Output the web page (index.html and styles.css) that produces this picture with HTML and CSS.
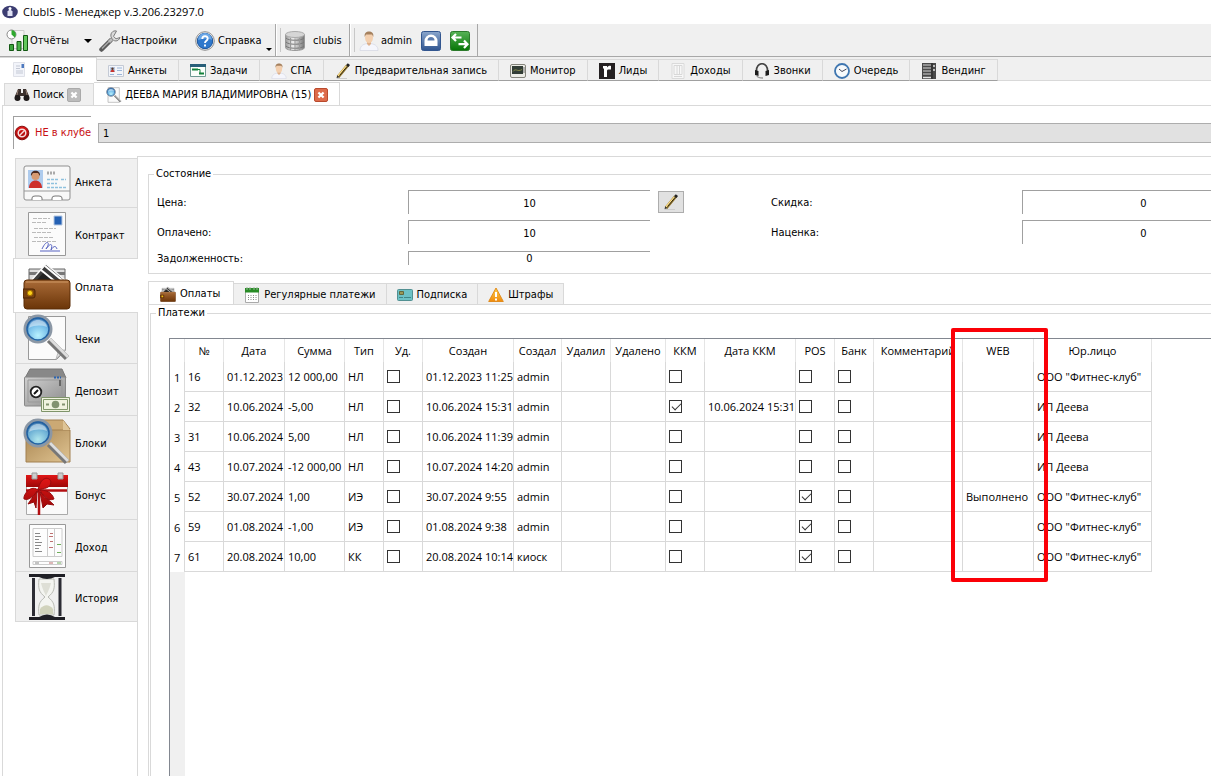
FILE: index.html
```html
<!DOCTYPE html>
<html lang="ru">
<head>
<meta charset="utf-8">
<title>ClubIS - Менеджер v.3.206.23297.0</title>
<link rel="stylesheet" href="styles.css">
</head>
<body>
<svg class="defs" aria-hidden="true">
  <defs>
    <linearGradient id="g-blue" x1="0" y1="0" x2="0" y2="1"><stop offset="0" stop-color="#8aa6cc"/><stop offset="1" stop-color="#2f548f"/></linearGradient>
    <linearGradient id="g-green" x1="0" y1="0" x2="0" y2="1"><stop offset="0" stop-color="#57b357"/><stop offset="1" stop-color="#067506"/></linearGradient>
    <linearGradient id="g-steel" x1="0" y1="0" x2="1" y2="0"><stop offset="0" stop-color="#999"/><stop offset=".4" stop-color="#eee"/><stop offset="1" stop-color="#777"/></linearGradient>
    <linearGradient id="g-brown" x1="0" y1="0" x2="0" y2="1"><stop offset="0" stop-color="#a96b38"/><stop offset="1" stop-color="#6b3508"/></linearGradient>
    <linearGradient id="g-safe" x1="0" y1="0" x2="1" y2="1"><stop offset="0" stop-color="#d0d0d0"/><stop offset="1" stop-color="#8c8c8c"/></linearGradient>
    <linearGradient id="g-box" x1="0" y1="0" x2="1" y2="1"><stop offset="0" stop-color="#a98652"/><stop offset="1" stop-color="#e0c492"/></linearGradient>
    <linearGradient id="g-red" x1="0" y1="0" x2="0" y2="1"><stop offset="0" stop-color="#e01616"/><stop offset="1" stop-color="#9d0808"/></linearGradient>
    <linearGradient id="g-warn" x1="0" y1="0" x2="0" y2="1"><stop offset="0" stop-color="#ffd24a"/><stop offset="1" stop-color="#f08a0c"/></linearGradient>
    <radialGradient id="g-lens" cx=".5" cy=".75" r=".75"><stop offset="0" stop-color="#aef0ff"/><stop offset=".55" stop-color="#63b4e6"/><stop offset="1" stop-color="#1d5ca8"/></radialGradient>
    <symbol id="i-magnifier" viewBox="0 0 48 48">
      <path d="M26 26l18 18" stroke="#777" stroke-width="6"/><path d="M27 25l18 18" stroke="#ddd" stroke-width="3"/>
      <circle cx="15" cy="15" r="13" fill="url(#g-lens)" fill-opacity=".88" stroke="#8b97a5" stroke-width="3"/>
      <circle cx="15" cy="15" r="11" fill="none" stroke="#2360a0" stroke-width="1.5"/>
      <path d="M6 14c1-6 5-8 9-8s8 2 9 7c-6-2-12-2-18 1z" fill="#fff" opacity=".45"/>
    </symbol>
    <symbol id="i-wallet" viewBox="0 0 48 48">
      <path d="M6 7h36v16H6z" fill="#ddd" stroke="#666"/><path d="M6 10h36v3H6z" fill="#777"/>
      <path d="M6 21L23 2l20 17" fill="#3d3d3d" stroke="#fafafa" stroke-width="1.5"/><path d="M12 20l9-10 15 12z" fill="#222"/><path d="M18 8l16 13M22 4l18 15" stroke="#fff" stroke-width="2"/>
      <rect x="1" y="18" width="46" height="29" rx="3" fill="url(#g-brown)" stroke="#5a2c07"/>
      <path d="M3 20h42" stroke="#cf9a67"/>
      <path d="M0 27h10q2 0 2 2v5q0 2-2 2H0z" fill="#7b430f" stroke="#4c2506"/>
      <circle cx="7" cy="31" r="2.6" fill="#ffd21a" stroke="#a87400"/>
    </symbol>
    <symbol id="i-pencil" viewBox="0 0 16 16">
      <path d="M2 15.500h10" stroke="#ccc"/><path d="M3 14L12.500 2.500" stroke="#8a6d24" stroke-width="3.200"/><path d="M3 13L12 2.500" stroke="#ffdf86" stroke-width="1.800"/><path d="M4.500 12.500L12.500 3" stroke="#2a2412"/>
      <path d="M11 2.200L12.800.3l2.200 1.700-1.500 2z" fill="#222"/><path d="M1.500 15.200l.8-3 2 1.700z" fill="#333"/>
    </symbol>
    <symbol id="i-user" viewBox="0 0 20 20">
      <path d="M1 19.500c0-5 4-7 9-7s9 2 9 7z" fill="#f5f6fc" stroke="#d2d5e2" stroke-width=".7"/><path d="M8 11h4v2l-2 2-2-2z" fill="#ddb08c"/><ellipse cx="10" cy="6.800" rx="4" ry="5.300" fill="#f3cfae"/><path d="M5.700 6C5.200 1.800 7.300.5 10 .5s4.900 1.300 4.300 5.500L13 3.500H7z" fill="#a5805d"/>
    </symbol>
  </defs>
</svg>

<header class="titlebar">
  <svg class="i16" viewBox="0 0 16 16"><ellipse cx="8" cy="8" rx="7.800" ry="6.200" fill="#3c3d72"/><path d="M5.500 12V7.500L8 5l2.500 2.500V12z" fill="#dfe1f3"/><circle cx="8" cy="4.400" r="1.500" fill="#fff"/></svg>
  <span>ClubIS - Менеджер v.3.206.23297.0</span>
</header>

<div class="toolbar">
  <div class="tools">
    <button class="tool tool-reports"><svg class="i24" viewBox="0 0 24 24"><path d="M6 1.500h12v18H6z" fill="#f4f4f4" stroke="#ccc"/><circle cx="5.500" cy="5.500" r="4.500" fill="#fff" stroke="#888"/><path d="M5.500 5.500V1A4.500 4.500 0 0 1 8.800 8.500z" fill="#2ea82e"/><g stroke="#135713"><path d="M3.500 15.500h4v6h-4z" fill="#3da53d"/><path d="M11 12.500h4v9h-4z" fill="#49b349"/><path d="M17.500 6.500h4v15h-4z" fill="#62c85c"/></g></svg>Отчёты<span class="caret"></span></button>
    <button class="tool tool-settings"><svg class="i22" viewBox="0 0 22 22"><path d="M2.500 19.500l9-9" stroke="#5a5a5a" stroke-width="4.500" stroke-linecap="round"/><path d="M3 18.500l8-8" stroke="#aaa" stroke-width="1.500"/><path d="M10 12l4-4" stroke="#bbb" stroke-width="3"/><path d="M17.500 1c-4-1-7 3-5 7 2 4 7 4 8.500-.5l-4 1.300-2.500-2.400z" fill="#dadada" stroke="#7c7c7c"/></svg>Настройки</button>
    <button class="tool tool-help"><svg class="i20" viewBox="0 0 20 20"><circle cx="10" cy="10" r="9.300" fill="#f2f2f2" stroke="#8c8c8c"/><circle cx="10" cy="10" r="7.700" fill="#2f78cc" stroke="#1c559c"/><path d="M3 9a7 7 0 0 1 14 0c-4-2-9-2-14 0z" fill="#6ba7e6"/><path d="M7.300 8c0-4 5.600-3.600 5.400-.4C12.600 9.800 10 9.600 10 12M10 13.600v1.800" fill="none" stroke="#fff" stroke-width="1.900"/></svg>Справка<span class="caret caret-small"></span></button>
  </div>
  <div class="tools tools-db">
    <button class="tool"><svg class="i20" viewBox="0 0 20 20"><path d="M.5 3.500v13c0 4 19 4 19 0v-13z" fill="url(#g-steel)" stroke="#999"/><ellipse cx="10" cy="3.500" rx="9.500" ry="3" fill="#d6d6d6" stroke="#aaa"/><path d="M1 7c2 3 16 3 18 0M1 11c2 3 16 3 18 0M1 15c2 3 16 3 18 0" fill="none" stroke="#777"/><path d="M5.500 7v12M10 7.500v12M14.500 7v12" stroke="#999"/></svg>clubis</button>
  </div>
  <div class="tools tools-user">
    <button class="tool"><svg class="i20"><use href="#i-user"/></svg>admin</button>
    <button class="tool" aria-label="Заблокировать"><svg class="i20" viewBox="0 0 20 20"><rect x=".5" y=".5" width="19" height="19" rx="2" fill="url(#g-blue)" stroke="#32568f"/><path d="M3.500 15v-5a6.500 6.500 0 0 1 13 0v5z" fill="#fff"/><path d="M6.500 9.500a3.500 3.500 0 0 1 7 0z" fill="#5b7cae"/></svg></button>
    <button class="tool" aria-label="Сменить пользователя"><svg class="i20" viewBox="0 0 20 20"><rect x=".5" y=".5" width="19" height="19" rx="2" fill="url(#g-green)" stroke="#2b7a2b"/><path d="M6 3L2.500 6.500 6 10M3 6.500h8.500M14 9.500l3.500 3.700L14 17M17 13.200H8.500" fill="none" stroke="#fff" stroke-width="2.200"/></svg></button>
  </div>
</div>

<nav class="main-tabs">
  <button class="tab active"><svg class="i16" viewBox="0 0 16 16"><path d="M1.500.5h11v14h-11z" fill="#f2f4fa" stroke="#dfe1e8"/><path d="M9.500 2H12v4H9.500z" fill="#4d79bf"/><path d="M4 4h4M4 6.500h4M4 9h7M4 11h7" stroke="#c3c8d4"/></svg>Договоры</button>
  <button class="tab"><svg class="i16" viewBox="0 0 16 16"><path d="M.5 2.500h15v11H.5z" fill="#f3f5fa" stroke="#c4cad5"/><path d="M2 4h5v5H2z" fill="#b8c8e2"/><path d="M2.500 9c0-3 4-3 4 0z" fill="#c8322d"/><circle cx="4.500" cy="5.800" r="1.200" fill="#5b3a2c"/><path d="M9 5h5M9 7.500h5M2 11.500h4M9 11.500h5" stroke="#9bb6d8"/></svg>Анкеты</button>
  <button class="tab"><svg class="i16" viewBox="0 0 16 16"><path d="M.5 1.500h15v12H.5z" fill="#fbfffb" stroke="#6f9a94"/><path d="M0 1h16v3H0z" fill="#285f79"/><path d="M2 6.500h6M9 10.500h5" stroke="#12813b" stroke-width="2"/><path d="M8 6.500h2v4" fill="none" stroke="#12813b"/></svg>Задачи</button>
  <button class="tab"><svg class="i16"><use href="#i-user"/></svg>СПА</button>
  <button class="tab"><svg class="i16"><use href="#i-pencil"/></svg>Предварительная запись</button>
  <button class="tab"><svg class="i16" viewBox="0 0 16 16"><rect x=".5" y="1.500" width="15" height="13" rx="1.500" fill="#ecece6" stroke="#84847c"/><path d="M2 3h11v8H2z" fill="#323d36"/><path d="M3 8.500c3-4 4 1 9-2" fill="none" stroke="#86894a"/><path d="M14 4v6" stroke="#777"/></svg>Монитор</button>
  <button class="tab"><svg class="i16" viewBox="0 0 16 16"><path d="M0 0h16v16H0z" fill="#242021"/><path d="M4 3h4v1.500c1-1.500 2.500-2 4-1.500v3.500H9.500c-1 0-1.500.5-1.500 1.500V14H5V5.500H4z" fill="#fff"/></svg>Лиды</button>
  <button class="tab"><svg class="i16" viewBox="0 0 16 16"><path d="M2 .5h12v15H2z" fill="#f7f7f7" stroke="#dadada"/><path d="M4 2.500h8v9H4zM7 2.500v9M9.500 2.500v9M4 13.500h8" fill="none" stroke="#d8d8d8"/></svg>Доходы</button>
  <button class="tab"><svg class="i16" viewBox="0 0 16 16"><path d="M2.500 9C1.500-2 14.500-2 13.500 9" fill="none" stroke="#444" stroke-width="1.700"/><path d="M1 7l3.500 1v5L1 12zM15 7l-3.500 1v5l3.500-1z" fill="#1d1d1d"/><path d="M3 13c1 2 4 2 6 2" fill="none" stroke="#999" stroke-width="1.500"/></svg>Звонки</button>
  <button class="tab"><svg class="i16" viewBox="0 0 16 16"><circle cx="8" cy="8" r="7" fill="#f7fafc" stroke="#3f76b0" stroke-width="1.800"/><path d="M5 6l3 2.500L12.500 6" fill="none" stroke="#445"/></svg>Очередь</button>
  <button class="tab"><svg class="i16" viewBox="0 0 16 16"><path d="M1 0h14v16H1z" fill="#4a4a4a"/><path d="M2 2h8M2 5h8M2 8h8M2 11h8" stroke="#a8a8a8" stroke-width="1.300"/><path d="M2 14.500h8M12 3h2M12 7h2" stroke="#e4e4e4" stroke-width="1.500"/><path d="M11 0v16" stroke="#222"/></svg>Вендинг</button>
</nav>

<main class="page">
  <div class="doc-tabs">
    <div class="doc-tab"><svg class="i16" viewBox="0 0 16 16"><path d="M4 2h3v4h2V2h3l3 7v4h-5V9H6v4H1V9z" fill="#3b302d"/><circle cx="3.500" cy="11" r="3" fill="#1f1b1b"/><circle cx="12.500" cy="11" r="3" fill="#1f1b1b"/><path d="M4 3l-1 5M12 3l1 5" stroke="#927c70"/></svg><span>Поиск</span><button class="close" aria-label="Закрыть"><svg viewBox="0 0 14 14"><path d="M4 4l6 6M10 4l-6 6" stroke="#fff" stroke-width="2.600"/></svg></button></div>
    <div class="doc-tab active"><svg class="i16" viewBox="0 0 48 48"><path d="M6 2h34v44H6z" fill="#fafafa" stroke="#aaa" stroke-width="2"/><use href="#i-magnifier" width="48" height="48"/></svg><span>ДЕЕВА МАРИЯ ВЛАДИМИРОВНА (15)</span><button class="close close-red" aria-label="Закрыть"><svg viewBox="0 0 14 14"><path d="M4 4l6 6M10 4l-6 6" stroke="#fff" stroke-width="2.600"/></svg></button></div>
  </div>

  <section class="client">
    <div class="status-row">
      <div class="status"><svg class="i16" viewBox="0 0 16 16"><circle cx="8" cy="8" r="6.800" fill="url(#g-red)" stroke="#861010"/><circle cx="8" cy="8" r="3.800" fill="none" stroke="#f5dede" stroke-width="1.500"/><path d="M5 11l6-6" stroke="#f5dede" stroke-width="1.500"/></svg>НЕ в клубе</div>
      <input class="note" type="text" value="1" aria-label="Заметка" readonly>
    </div>

    <div class="workspace">
      <nav class="side-tabs">
        <button class="side-tab"><svg class="i48" viewBox="0 0 48 48"><rect x="1" y="7" width="46" height="34" rx="2" fill="#f8f8f8" stroke="#8f8f8f"/><path d="M1 32h46" stroke="#999"/><path d="M9 41v-2q0-2 3-2h4q3 0 3 2v2M29 41v-2q0-2 3-2h4q3 0 3 2v2" fill="#fff" stroke="#777"/><path d="M5 11h15v18H5z" fill="#aecbed"/><path d="M6 29c0-10 13-10 13 0z" fill="#ce302b"/><circle cx="12.500" cy="17" r="4" fill="#d79a71"/><path d="M8 17c-1-7 10-7 9 0l-2-3H10z" fill="#4b2a20"/><path d="M24 14h9" stroke="#aaa" stroke-width="3" stroke-dasharray="2 1"/><path d="M24 20.500h12M38 20.500h5M24 24.500h10M24 28.500h19" stroke="#8fc1de" stroke-width="1.300" stroke-dasharray="3 1"/></svg><span>Анкета</span></button>
        <button class="side-tab"><svg class="i48" viewBox="0 0 48 48"><path d="M5.500 2.500h37v43h-37z" fill="#fbfbfb" stroke="#999"/><path d="M31 6h8v9h-8z" fill="#2461b4" stroke="#b4c7e1"/><path d="M10 8.500h17M9 12.500h15M11 18.500h22M9 22.500h19M11 27.500h20M9 31.500h25" stroke="#bbb" stroke-dasharray="4 1"/><path d="M19 39c5-11 9-6 4 0 5-7 7-5 5 1 3-5 5-4 6-1M17 41h20" fill="none" stroke="#5663c1"/></svg><span>Контракт</span></button>
        <button class="side-tab active"><svg class="i48"><use href="#i-wallet"/></svg><span>Оплата</span></button>
        <button class="side-tab"><svg class="i48" viewBox="0 0 48 48"><path d="M5.500 2.500h37v34l-9 9h-28z" fill="#fbfbfb" stroke="#999"/><path d="M33 45q3-6 1-10 5 2 8 1z" fill="#ddd" stroke="#bbb"/><use href="#i-magnifier" width="48" height="48"/></svg><span>Чеки</span></button>
        <button class="side-tab"><svg class="i48" viewBox="0 0 48 48"><path d="M7 3h32l4 9H2z" fill="#888" stroke="#777"/><rect x="1.500" y="11" width="41" height="29" rx="1" fill="url(#g-safe)" stroke="#888"/><path d="M5 14h34v22H5z" fill="none" stroke="#999"/><circle cx="13" cy="26" r="5.300" fill="#fff" stroke="#222" stroke-width="1.800"/><path d="M11 28l4-4" stroke="#111" stroke-width="2"/><path d="M31 11.500h7" stroke="#2963b0" stroke-width="2" stroke-dasharray="2 1"/><path d="M37 14v6" stroke="#666" stroke-width="2"/><path d="M18.500 31.500h28v14h-28z" fill="#f0f3df" stroke="#7f946a"/><path d="M20.500 33.500h24v10h-24z" fill="none" stroke="#82976c"/><circle cx="32.500" cy="38.500" r="3.800" fill="#82936f"/><path d="M23 38.500h3M39 38.500h3" stroke="#82936f" stroke-width="2"/></svg><span>Депозит</span></button>
        <button class="side-tab"><svg class="i48" viewBox="0 0 48 48"><path d="M3 10L10 2h30l7 9-7 3z" fill="#cba974" stroke="#a28050"/><path d="M3 12h44v32H3z" fill="url(#g-box)" stroke="#a28050"/><path d="M40 2v10h7" fill="#dec496"/><use href="#i-magnifier" width="48" height="48"/></svg><span>Блоки</span></button>
        <button class="side-tab"><svg class="i48" viewBox="0 0 48 48"><path d="M3.500 5.500h41v39h-41z" fill="#fafafa" stroke="#aaa"/><path d="M3 5h42v12H3z" fill="url(#g-red)"/><path d="M16 18v27M3 20.500h41" stroke="#b30f12" stroke-width="2.500"/><path d="M16 21C8 13 0 25 1 29c6 2 9-4 15-8zM15 20c3-15 12-13 13-8-1 7-7 6-13 8zM17 20c9 0 13 5 14 9-8 3-11-4-14-9zM14 21L5 34l6-2 2 6zM17 22l3 16 4-4 7 1z" fill="url(#g-red)" stroke="#960c0e"/><path d="M9 3h5v6H9zM35 3h5v6h-5z" fill="#ccc" stroke="#999"/></svg><span>Бонус</span></button>
        <button class="side-tab"><svg class="i48" viewBox="0 0 48 48"><path d="M6.500 2.500h36v43h-36z" fill="#fdfdfd" stroke="#999"/><path d="M10 6.500h29v28H10zM24.500 6v29M31.500 6v29M10 39.500h29v3H10z" fill="none" stroke="#ccc"/><path d="M12 11.500h5M12 14.500h6M12 17.500h4M12 20.500h7M12 23.500h6M12 26.500h4M12 29.500h7M12 41h4" stroke="#888"/><path d="M27 11.500h3M26 14.500h4M27 19.500h3M26 25.500h4M26 41h4" stroke="#bd7070"/><path d="M34 22.500h4M34 30.500h4M34 41h4" stroke="#6fae5a"/></svg><span>Доход</span></button>
        <button class="side-tab"><svg class="i48" viewBox="0 0 48 48"><path d="M16 6c-1 10 0 13 6 18-6 5-7 8-6 18h15c1-10 0-13-6-18 6-5 7-8 6-18z" fill="#f4f5f1" stroke="#b9bbb4"/><path d="M17 36c4-5 9-5 13 0v5H17z" fill="#d1d3bc"/><path d="M18 10c2 8 4 10 5 13 1-3 3-5 5-13" fill="#dedfd6"/><path d="M10.500 5v38M37 5v38" stroke="#2c2c34" stroke-width="3"/><path d="M6 1h36v3H32q-8 4-16 0H6zM6 47h36v-3H32q-8-5-16 0H6z" fill="#1f1f25"/></svg><span>История</span></button>
      </nav>

      <div class="pane">
        <fieldset class="group state">
          <legend>Состояние</legend>
          <div class="state-grid">
            <label for="price">Цена:</label><input id="price" class="value" value="10" readonly>
            <button class="edit" aria-label="Изменить цену"><svg class="i16"><use href="#i-pencil"/></svg></button>
            <label for="discount">Скидка:</label><input id="discount" class="value" value="0" readonly>
            <label for="paid">Оплачено:</label><input id="paid" class="value" value="10" readonly><span></span>
            <label for="markup">Наценка:</label><input id="markup" class="value" value="0" readonly>
            <label for="debt">Задолженность:</label><input id="debt" class="value value-short" value="0" readonly>
          </div>
        </fieldset>

        <nav class="pay-tabs">
          <button class="tab active"><svg class="i16"><use href="#i-wallet"/></svg>Оплаты</button>
          <button class="tab"><svg class="i16" viewBox="0 0 16 16"><path d="M1.500 2.500h13v13h-13z" fill="#fff" stroke="#aaa"/><path d="M1 1h14v4.500H1z" fill="#278b25"/><path d="M3 0v3M6 0v3M10 0v3M13 0v3" stroke="#9ab59a"/><path d="M4 8.500h9M4 10.500h9M4 12.500h9" stroke="#888" stroke-dasharray="1 1.500"/></svg>Регулярные платежи</button>
          <button class="tab"><svg class="i16" viewBox="0 0 16 16"><rect x=".5" y="2.500" width="15" height="11" rx="1" fill="#6cc1c5" stroke="#529092"/><path d="M2.500 4.500h4v3h-4z" fill="#9a9857" stroke="#62683d"/><path d="M2 10.500h4M7 10.500h7" stroke="#3d8789"/></svg>Подписка</button>
          <button class="tab"><svg class="i16" viewBox="0 0 16 16"><path d="M8 1l7.300 13.500H.7z" fill="url(#g-warn)" stroke="#e18b1c" stroke-linejoin="round"/><path d="M8 5v5M8 11.500v2" stroke="#fff" stroke-width="2"/></svg>Штрафы</button>
        </nav>

        <div class="pay-pane">
          <fieldset class="group payments">
            <legend>Платежи</legend>
            <div class="grid-frame">
              <table class="grid">
                <colgroup><col class="w-row"><col class="w-s"><col class="w-date"><col class="w-sum"><col class="w-s"><col class="w-s"><col class="w-time"><col class="w-author"><col class="w-deleted"><col class="w-deleted-at"><col class="w-s"><col class="w-time"><col class="w-s"><col class="w-s"><col class="w-comment"><col class="w-web"><col class="w-org"></colgroup>
                <thead><tr><th></th><th>№</th><th>Дата</th><th>Сумма</th><th>Тип</th><th>Уд.</th><th>Создан</th><th>Создал</th><th>Удалил</th><th>Удалено</th><th>ККМ</th><th>Дата ККМ</th><th>POS</th><th>Банк</th><th>Комментарий</th><th>WEB</th><th>Юр.лицо</th></tr></thead>
                <tbody>
                  <tr><th>1</th><td>16</td><td>01.12.2023</td><td>12 000,00</td><td>НЛ</td><td><input type="checkbox" aria-label="Удалён"></td><td>01.12.2023 11:25</td><td>admin</td><td></td><td></td><td><input type="checkbox" aria-label="ККМ"></td><td></td><td><input type="checkbox" aria-label="POS"></td><td><input type="checkbox" aria-label="Банк"></td><td></td><td></td><td>ООО "Фитнес-клуб"</td></tr>
                  <tr><th>2</th><td>32</td><td>10.06.2024</td><td>-5,00</td><td>НЛ</td><td><input type="checkbox" aria-label="Удалён"></td><td>10.06.2024 15:31</td><td>admin</td><td></td><td></td><td><input type="checkbox" aria-label="ККМ" checked></td><td>10.06.2024 15:31</td><td><input type="checkbox" aria-label="POS"></td><td><input type="checkbox" aria-label="Банк"></td><td></td><td></td><td>ИП Деева</td></tr>
                  <tr><th>3</th><td>31</td><td>10.06.2024</td><td>5,00</td><td>НЛ</td><td><input type="checkbox" aria-label="Удалён"></td><td>10.06.2024 11:39</td><td>admin</td><td></td><td></td><td><input type="checkbox" aria-label="ККМ"></td><td></td><td><input type="checkbox" aria-label="POS"></td><td><input type="checkbox" aria-label="Банк"></td><td></td><td></td><td>ИП Деева</td></tr>
                  <tr><th>4</th><td>43</td><td>10.07.2024</td><td>-12 000,00</td><td>НЛ</td><td><input type="checkbox" aria-label="Удалён"></td><td>10.07.2024 14:20</td><td>admin</td><td></td><td></td><td><input type="checkbox" aria-label="ККМ"></td><td></td><td><input type="checkbox" aria-label="POS"></td><td><input type="checkbox" aria-label="Банк"></td><td></td><td></td><td>ИП Деева</td></tr>
                  <tr><th>5</th><td>52</td><td>30.07.2024</td><td>1,00</td><td>ИЭ</td><td><input type="checkbox" aria-label="Удалён"></td><td>30.07.2024 9:55</td><td>admin</td><td></td><td></td><td><input type="checkbox" aria-label="ККМ"></td><td></td><td><input type="checkbox" aria-label="POS" checked></td><td><input type="checkbox" aria-label="Банк"></td><td></td><td>Выполнено</td><td>ООО "Фитнес-клуб"</td></tr>
                  <tr><th>6</th><td>59</td><td>01.08.2024</td><td>-1,00</td><td>ИЭ</td><td><input type="checkbox" aria-label="Удалён"></td><td>01.08.2024 9:38</td><td>admin</td><td></td><td></td><td><input type="checkbox" aria-label="ККМ"></td><td></td><td><input type="checkbox" aria-label="POS" checked></td><td><input type="checkbox" aria-label="Банк"></td><td></td><td></td><td>ООО "Фитнес-клуб"</td></tr>
                  <tr><th>7</th><td>61</td><td>20.08.2024</td><td>10,00</td><td>КК</td><td><input type="checkbox" aria-label="Удалён"></td><td>20.08.2024 10:14</td><td>киоск</td><td></td><td></td><td><input type="checkbox" aria-label="ККМ"></td><td></td><td><input type="checkbox" aria-label="POS" checked></td><td><input type="checkbox" aria-label="Банк"></td><td></td><td></td><td>ООО "Фитнес-клуб"</td></tr>
                </tbody>
              </table>
              <div class="row-gutter"></div>
              <div class="highlight"></div>
            </div>
          </fieldset>
        </div>
      </div>
    </div>
  </section>
</main>
</body>
</html>
```
FILE: styles.css
```css
* { box-sizing: border-box; }

html, body { height: 100%; }

body {
  margin: 0;
  display: flex;
  flex-direction: column;
  overflow: hidden;
  background: #fff;
  color: #000;
  font: 11px/14px "DejaVu Sans Condensed", "Noto Sans", sans-serif;
}

button, input { font: inherit; color: inherit; }

button {
  margin: 0;
  padding: 0;
  border: 0;
  background: none;
  white-space: nowrap;
}

svg { display: block; flex: none; }

.defs { position: absolute; width: 0; height: 0; }
.i16 { width: 16px; height: 16px; }
.i20 { width: 20px; height: 20px; }
.i22 { width: 22px; height: 22px; }
.i24 { width: 24px; height: 24px; }
.i48 { width: 48px; height: 48px; }

/* Title bar */
.titlebar {
  display: flex;
  align-items: center;
  gap: 5px;
  flex: none;
  height: 24px;
  padding-left: 2px;
  font-family: "Open Sans", "Noto Sans", sans-serif;
}

/* Toolbar */
.toolbar {
  display: flex;
  flex: none;
  height: 33px;
  background: #f0f0f0;
  border-bottom: 1px solid #a8a8a8;
}

.tools {
  display: flex;
  align-items: center;
  gap: 9px;
  padding: 2px 6px 0;
  border-right: 1px solid #a8a8a8;
}

.tools:first-child { gap: 7px; width: 276px; }

.tools-db, .tools-user {
  border-left: 1px solid #fff;
  padding-left: 8px;
  background: linear-gradient(#c8c8c8, #c8c8c8) 3px 4px / 1px 24px no-repeat;
}

.tools-db { width: 74px; }
.tools-user { width: 128px; }
.tool { display: flex; align-items: center; }
.tools-db .tool { gap: 8px; }
.tools-user .tool { gap: 2px; }
.tool-help { gap: 3px; margin-left: 11px; }

.caret {
  border: 4px solid transparent;
  border-top-color: #000;
  border-bottom: 0;
  margin-left: 15px;
}

.caret-small {
  border-width: 3px;
  border-bottom: 0;
  margin: 16px 0 0 1px;
}

/* Tabs */
.main-tabs, .doc-tabs, .pay-tabs { display: flex; align-items: flex-end; }

.tab {
  display: flex;
  align-items: center;
  gap: 4px;
  height: 21px;
  padding: 2px 10px 0;
  background: #f0f0f0;
  border: 1px solid #d9d9d9;
  border-left: 0;
}

.tab.active { background: #fff; }

.main-tabs {
  flex: none;
  height: 24px;
  background: #f0f0f0;
  border-bottom: 1px solid #d9d9d9;
}

.main-tabs .tab { height: 22px; border-bottom-color: #a0a0a0; margin-bottom: -1px; padding: 2px 11px 0; }
.main-tabs .tab.active { height: 24px; border-bottom-color: #fff; padding: 1px 13px 0 12px; }

/* Document tabs */
.page {
  display: flex;
  flex-direction: column;
  flex: 1;
  min-height: 0;
  padding: 1px 0 0 2px;
}

.doc-tabs { padding-left: 2px; }

.doc-tab {
  display: flex;
  align-items: center;
  gap: 3px;
  height: 22px;
  padding: 1px 12px 0 9px;
  background: #f0f0f0;
  border: 1px solid #d9d9d9;
  border-bottom: 0;
}

.doc-tab.active {
  height: 24px;
  margin-bottom: -1px;
  padding: 1px 11px 0 12px;
  border-left: 0;
  background: #fff;
}

.close {
  width: 14px;
  height: 14px;
  border: 1px solid #aaa;
  border-radius: 2px;
  background: #bcbcbc;
}

.close svg { width: 12px; height: 12px; }
.close-red { border-color: #b94a2d; background: #dd6b4b; }

.client {
  display: flex;
  flex-direction: column;
  flex: 1;
  min-height: 0;
  padding: 10px 0 0 10px;
  border-top: 1px solid #d9d9d9;
  border-left: 1px solid #d9d9d9;
}

.status-row { display: flex; align-items: center; gap: 7px; }

.status {
  display: flex;
  align-items: center;
  gap: 5px;
  width: 78px;
  height: 33px;
  border-top: 1px solid #a0a0a0;
  border-left: 1px solid #a0a0a0;
  color: #c80f14;
  white-space: nowrap;
}

.note {
  flex: 1;
  min-width: 0;
  height: 20px;
  padding: 2px 4px 0;
  border: 1px solid #adadad;
  border-right: 0;
  background: #e1e1e1;
}

/* Side tabs */
.workspace { display: flex; flex: 1; min-height: 0; padding-top: 7px; }

.side-tabs {
  display: flex;
  flex-direction: column;
  flex: none;
  width: 124px;
  padding: 2px 0 0 2px;
}

.side-tab {
  display: flex;
  align-items: center;
  gap: 4px;
  height: 52px;
  padding-left: 7px;
  background: #f0f0f0;
  border: 1px solid #d9d9d9;
  border-bottom: 0;
  border-right: 0;
}

.side-tab span { padding-top: 4px; }
.side-tab:first-child { height: 49px; }
.side-tab:first-child span { padding-top: 0; }
.side-tab:last-child { height: 51px; border-bottom: 1px solid #d9d9d9; }

.side-tab.active {
  height: 55px;
  margin: -1px -1px -2px -2px;
  padding-left: 9px;
  background: #fff;
  border: 1px solid #d9d9d9;
  border-right: 0;
  z-index: 1;
}

.pane {
  display: flex;
  flex-direction: column;
  flex: 1;
  min-width: 0;
  padding: 10px 0 0 10px;
  border-top: 1px solid #d9d9d9;
  border-left: 1px solid #d9d9d9;
}

/* Group boxes */
.group {
  min-width: 0;
  margin: 0;
  border: 1px solid #d9d9d9;
  border-right: 0;
}

.group legend { padding: 0 2px; }

.state { height: 107px; padding: 9px 0 0 8px; }
.state legend { margin-left: -3px; }

.state-grid {
  display: grid;
  grid-template-columns: 251px 242px 121px 251px 242px;
  row-gap: 6px;
  align-items: center;
}

.state-grid label { padding-top: 2px; }

.value {
  width: 100%;
  height: 24px;
  padding: 2px 0 0;
  border: 0;
  border-top: 1px solid #a0a0a0;
  border-left: 1px solid #a0a0a0;
  background: #fff;
  text-align: center;
}

.value-short { height: 14px; padding: 1px 0 0; }

.edit {
  display: flex;
  align-items: center;
  justify-content: center;
  width: 26px;
  height: 22px;
  margin-left: 8px;
  background: #e1e1e1;
  border: 1px solid #adadad;
}

.pay-tabs { margin-top: 7px; }
.pay-tabs .tab { border-bottom: 0; }
.pay-tabs .tab.active { height: 24px; margin-bottom: -1px; border-left: 1px solid #d9d9d9; padding: 1px 13px 0 11px; }

.pay-pane {
  display: flex;
  flex: 1;
  min-height: 0;
  padding: 1px 0 0 1px;
  border-top: 1px solid #d9d9d9;
  border-left: 1px solid #d9d9d9;
}

.payments {
  display: flex;
  flex: 1;
  padding: 18px 0 0 18px;
  border-bottom: 0;
}

.payments legend { margin-left: -13px; }

/* Payments table */
.grid-frame {
  position: relative;
  display: flex;
  flex-direction: column;
  flex: 1;
  min-width: 0;
  border-top: 1px solid #828790;
  border-left: 1px solid #828790;
}

.grid {
  flex: none;
  table-layout: fixed;
  width: 982px;
  border-collapse: separate;
  border-spacing: 0;
  font-family: "Open Sans", "Noto Sans", sans-serif;
  font-size: 11px;
}

.grid th, .grid td {
  height: 30px;
  padding: 0 0 0 3px;
  border-right: 1px solid #d9d9d9;
  border-bottom: 1px solid #d9d9d9;
  font-weight: 400;
  text-align: left;
  white-space: nowrap;
}

.grid thead th {
  height: 23px;
  padding: 0;
  border-bottom: 0;
  border-right-color: #e5e5e5;
  text-align: center;
}

.grid tbody th { border-bottom: 0; padding: 2px 0 0 4px; }

.grid input {
  display: block;
  appearance: none;
  width: 13px;
  height: 13px;
  margin: 0;
  border: 1px solid #333;
  background: #fff;
}

.grid input:checked::before {
  content: "";
  display: block;
  width: 8px;
  height: 4px;
  margin: 2px 0 0 2px;
  border-left: 1px solid #333;
  border-bottom: 1px solid #333;
  transform: rotate(-45deg);
}

.w-row { width: 15px; }
.w-s { width: 39px; }
.w-date { width: 61px; }
.w-sum { width: 60px; }
.w-time { width: 91px; }
.w-author { width: 48px; }
.w-deleted { width: 49px; }
.w-deleted-at { width: 55px; }
.w-comment { width: 89px; }
.w-web { width: 71px; }
.w-org { width: 118px; }

.row-gutter { flex: 1; width: 15px; background: #f0f0f0; }

.highlight {
  position: absolute;
  left: 781px;
  top: -11px;
  width: 97px;
  height: 254px;
  border: 4px solid #fb0007;
  border-radius: 2px;
  pointer-events: none;
}
```
